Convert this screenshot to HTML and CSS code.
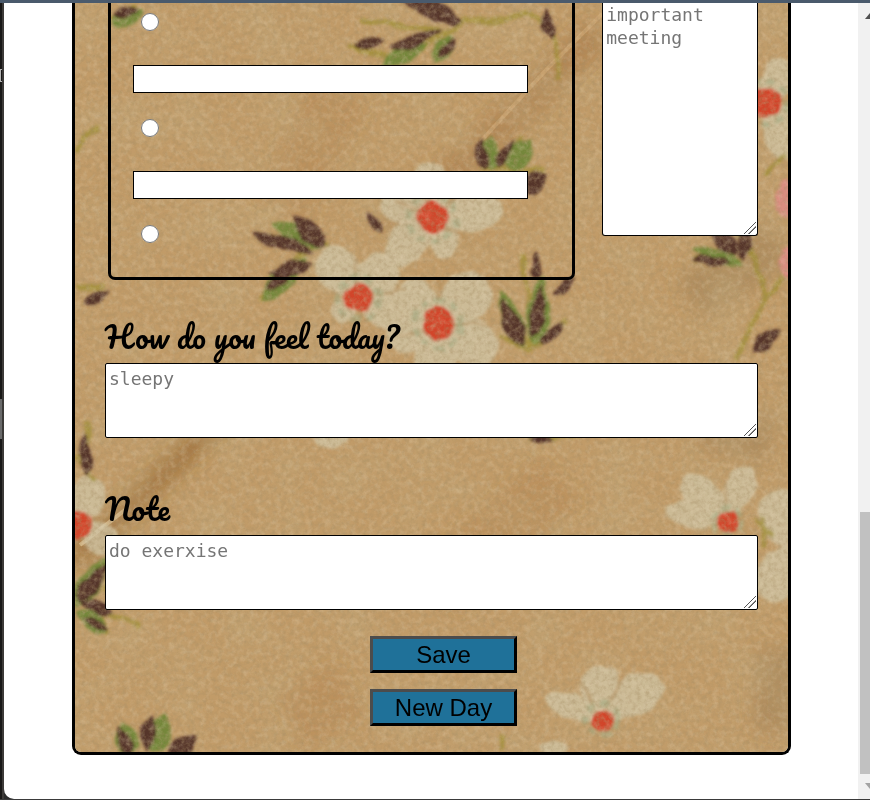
FILE: index.html
```html
<!DOCTYPE html>
<html lang="en">
<head>
<meta charset="utf-8">
<meta name="viewport" content="width=device-width, initial-scale=1">
<title>Daily planner</title>
<link rel="stylesheet" href="styles.css">
</head>
<body>
<div class="window">
  <div class="edge" aria-hidden="true"><span class="edge-mark"></span><span class="edge-tab"></span></div>
  <main class="page">
    <form class="planner">
      <svg class="fabric" viewBox="75 3 713 749" preserveAspectRatio="none" aria-hidden="true">
        <defs>
          <filter id="grain" x="0" y="0" width="100%" height="100%">
            <feTurbulence type="fractalNoise" baseFrequency="0.22" numOctaves="4" seed="8"/>
            <feColorMatrix values="0 0 0 0 .38  0 0 0 0 .27  0 0 0 0 .13  1.7 0 0 0 -.68"/>
          </filter>
          <filter id="light" x="0" y="0" width="100%" height="100%">
            <feTurbulence type="fractalNoise" baseFrequency="0.16" numOctaves="4" seed="31"/>
            <feColorMatrix values="0 0 0 0 .86  0 0 0 0 .73  0 0 0 0 .53  0 1.6 0 0 -.68"/>
          </filter>
          <filter id="cloud" x="0" y="0" width="100%" height="100%">
            <feTurbulence type="fractalNoise" baseFrequency="0.02" numOctaves="4" seed="5"/>
            <feColorMatrix values="0 0 0 0 .55  0 0 0 0 .42  0 0 0 0 .22  1.8 0 0 0 -.7"/>
          </filter>
          <filter id="soft" x="-10%" y="-10%" width="120%" height="120%">
            <feTurbulence type="fractalNoise" baseFrequency="0.05" numOctaves="2" seed="3"/>
            <feDisplacementMap in="SourceGraphic" scale="9" xChannelSelector="R" yChannelSelector="G"/>
            <feGaussianBlur stdDeviation="1.5"/>
          </filter>
          <filter id="haze" x="-20%" y="-20%" width="140%" height="140%"><feGaussianBlur stdDeviation="9"/></filter>
          <path id="leaf" d="M0 0C-13-8-14-22 0-38C13-22 13-9 0 0Z"/>
          <path id="petal" d="M0 0C-18-10-26-34-14-48C-5-58 9-56 16-46C25-32 16-10 0 0Z"/>
        </defs>
        <rect x="75" y="3" width="713" height="749" fill="#c19b68"/>
        <g filter="url(#haze)" fill="none">
          <path d="M600 30L480 150L390 230" stroke="#9d6c36" stroke-width="34" opacity=".4"/>
          <path d="M240 400L75 560" stroke="#8b5922" stroke-width="24" opacity=".55"/>
          <path d="M340 90L280 210M560 480L440 590M350 690L290 720" stroke="#ad7437" stroke-width="60" opacity=".25"/>
          <path d="M690 300L780 240M770 440L700 420M780 650V730" stroke="#95784e" stroke-width="50" opacity=".4"/>
        </g>
        <rect x="75" y="3" width="713" height="749" filter="url(#cloud)" opacity=".5"/>
        <path d="M602 14L548 68L480 142" fill="none" stroke="#d8b280" stroke-width="4" opacity=".5"/>
        <path d="M80 545L125 510" fill="none" stroke="#dfc79b" stroke-width="4" opacity=".7"/>
        <g filter="url(#soft)">
          <g fill="#d0c5a5" opacity=".76">
            <use href="#petal" transform="translate(432 218) rotate(82) scale(1 1.3)"/>
            <use href="#petal" transform="translate(432 218) rotate(-3)"/>
            <use href="#petal" transform="translate(432 218) rotate(-65)"/>
            <use href="#petal" transform="translate(432 218) rotate(-135) scale(1 1.1)"/>
            <use href="#petal" transform="translate(432 218) rotate(155) scale(.8)"/>
            <use href="#petal" transform="translate(358 298) rotate(-35) scale(1.1)"/>
            <use href="#petal" transform="translate(358 298) rotate(42)"/>
            <use href="#petal" transform="translate(358 298) rotate(110)"/>
            <use href="#petal" transform="translate(358 298) rotate(-130) scale(.6)"/>
            <use href="#petal" transform="translate(438 324) rotate(45) scale(1.2)"/>
            <use href="#petal" transform="translate(438 324) rotate(-40)"/>
            <use href="#petal" transform="translate(438 324) rotate(118) scale(1.2)"/>
            <use href="#petal" transform="translate(438 324) rotate(185) scale(1.1)"/>
            <use href="#petal" transform="translate(438 324) rotate(-110) scale(1)"/>
            <use href="#petal" transform="translate(765 103) rotate(30) scale(.9)"/>
            <use href="#petal" transform="translate(765 103) rotate(145) scale(1.2)"/>
            <use href="#petal" transform="translate(765 103) rotate(-100)"/>
            <use href="#petal" transform="translate(726 521) rotate(22) scale(.75 1.1)"/>
            <use href="#petal" transform="translate(726 521) rotate(-43) scale(.9 1.1)"/>
            <use href="#petal" transform="translate(726 521) rotate(-78) scale(.65 1.1)"/>
            <use href="#petal" transform="translate(785 548) rotate(-7) scale(1.1)"/>
            <use href="#petal" transform="translate(788 545) rotate(200) scale(1.1)"/>
            <use href="#petal" transform="translate(601 719) rotate(-3) scale(1)"/>
            <use href="#petal" transform="translate(601 719) rotate(56) scale(1 1.3)"/>
            <use href="#petal" transform="translate(601 719) rotate(-68) scale(.65 1.1)"/>
            <use href="#petal" transform="translate(80 524) rotate(15) scale(.9)"/>
            <use href="#petal" transform="translate(80 524) rotate(125) scale(.8)"/>
            <ellipse cx="331" cy="440" rx="17" ry="8"/><ellipse cx="555" cy="749" rx="14" ry="7"/>
          </g>
          <g fill="none" stroke="#b08a58" stroke-width="3" opacity=".5">
            <path d="M432 218L410 165M432 218L395 200M432 218L465 190M432 218L475 245M358 298L355 255M358 298L405 290M438 324L440 275M438 324L400 335M438 324L490 325M601 719L625 675M601 719L580 680M726 521L725 480"/>
          </g>
          <g fill="none" stroke="#a0a981" stroke-width="6" opacity=".6" stroke-dasharray="9 6">
            <circle cx="432" cy="218" r="24"/><circle cx="358" cy="298" r="21"/><circle cx="438" cy="324" r="23"/>
            <circle cx="765" cy="103" r="22"/><circle cx="726" cy="521" r="14"/><circle cx="601" cy="719" r="16"/>
          </g>
          <g fill="none" stroke="#9b8c31" stroke-width="5" opacity=".7">
            <path d="M350 46L400 62L464 20L505 20C535 5 550 25 557 52L557 80M360 20L440 30"/>
            <path d="M480 170L545 170M498 170L522 136M260 300L320 235M270 235L330 245"/>
            <path d="M530 353C535 315 526 285 522 255M530 350L505 305M530 350L568 320M530 350L500 335"/>
            <path d="M730 220C745 245 765 265 764 302L735 360M695 258L740 262M764 300L785 275M764 175L785 155"/>
            <path d="M87 420V475M77 455L95 480M75 150L98 125M78 600L140 625M105 590L120 570M100 610L108 635"/>
            <path d="M764 515V550M755 520L775 535M500 750L503 735M155 750L165 725M110 20L135 5M76 288L105 285M528 438L580 435"/>
          </g>
          <g fill="#75873a">
            <use href="#leaf" transform="translate(382 66) rotate(64) scale(.8 1.4)"/>
            <use href="#leaf" transform="translate(434 63) rotate(30) scale(.9)"/>
            <use href="#leaf" transform="translate(506 168) rotate(42) scale(1.3 1)"/>
            <use href="#leaf" transform="translate(488 172) rotate(5) scale(1)"/>
            <use href="#leaf" transform="translate(324 246) rotate(-65) scale(1 1.5)"/>
            <use href="#leaf" transform="translate(263 300) rotate(45) scale(1.1 1.6)"/>
            <use href="#leaf" transform="translate(524 348) rotate(-22) scale(1 1.7)"/>
            <use href="#leaf" transform="translate(535 346) rotate(6) scale(1.1 1.9)"/>
            <use href="#leaf" transform="translate(742 265) rotate(-72) scale(.8 1.4)"/>
            <use href="#leaf" transform="translate(76 606) rotate(32) scale(1.2 1.5)"/>
            <use href="#leaf" transform="translate(153 751) rotate(18) scale(1.3 1.1)"/>
            <use href="#leaf" transform="translate(131 755) rotate(-15) scale(1.1 .9)"/>
            <use href="#leaf" transform="translate(110 25) rotate(65) scale(1)"/>
            <use href="#leaf" transform="translate(107 634) rotate(-50)"/>
          </g>
          <g fill="#553429">
            <use href="#leaf" transform="translate(462 22) rotate(-68) scale(.9 1.9)"/>
            <use href="#leaf" transform="translate(356 46) rotate(79) scale(.6 .8)"/>
            <use href="#leaf" transform="translate(390 50) rotate(69) scale(.6 1.5)"/>
            <use href="#leaf" transform="translate(438 58) rotate(36) scale(.6 .7)"/>
            <use href="#leaf" transform="translate(551 41) rotate(-10) scale(.6 .9)"/>
            <use href="#leaf" transform="translate(483 172) rotate(-2) scale(.6 .9)"/>
            <use href="#leaf" transform="translate(496 169) rotate(30) scale(.6 .9)"/>
            <use href="#leaf" transform="translate(519 192) rotate(58) scale(1 .9)"/>
            <use href="#leaf" transform="translate(325 246) rotate(-48) scale(1.1 1.2)"/>
            <use href="#leaf" transform="translate(311 252) rotate(-73) scale(.8 1.7)"/>
            <use href="#leaf" transform="translate(312 263) rotate(-105) scale(.7 1.2)"/>
            <use href="#leaf" transform="translate(265 292) rotate(50) scale(.6 1.2)"/>
            <use href="#leaf" transform="translate(382 234) rotate(-38) scale(.6 .7)"/>
            <use href="#leaf" transform="translate(524 347) rotate(-25) scale(.9 1.4)"/>
            <use href="#leaf" transform="translate(533 340) rotate(10) scale(.7 1.5)"/>
            <use href="#leaf" transform="translate(539 344) rotate(50) scale(.6 .9)"/>
            <use href="#leaf" transform="translate(537 278) rotate(-5) scale(.5 .7)"/>
            <use href="#leaf" transform="translate(554 294) rotate(55) scale(.5 .7)"/>
            <use href="#leaf" transform="translate(738 256) rotate(-46) scale(.9 .9)"/>
            <use href="#leaf" transform="translate(730 264) rotate(-80) scale(.5 1)"/>
            <use href="#leaf" transform="translate(743 261) rotate(5) scale(.7 1)"/>
            <use href="#leaf" transform="translate(752 350) rotate(57) scale(.8 .9)"/>
            <use href="#leaf" transform="translate(84 304) rotate(62) scale(.6 .8)"/>
            <use href="#leaf" transform="translate(88 476) rotate(-6) scale(.6 1.1)"/>
            <use href="#leaf" transform="translate(78 602) rotate(38) scale(.9 1.2)"/>
            <use href="#leaf" transform="translate(115 612) rotate(-75) scale(.7 1)"/>
            <use href="#leaf" transform="translate(109 631) rotate(-65) scale(.5 .8)"/>
            <use href="#leaf" transform="translate(147 751) rotate(4) scale(.7 1)"/>
            <use href="#leaf" transform="translate(131 755) rotate(-26) scale(.6 .8)"/>
            <use href="#leaf" transform="translate(167 758) rotate(52) scale(1 1)"/>
            <use href="#leaf" transform="translate(112 15) rotate(75) scale(.6 .7)"/>
            <use href="#leaf" transform="translate(528 439) rotate(90) scale(.3 .7)"/>
          </g>
          <g fill="#d2452b">
            <circle cx="433" cy="218" r="16"/><circle cx="359" cy="297" r="15"/><circle cx="439" cy="324" r="16"/>
            <circle cx="766" cy="103" r="15"/><circle cx="727" cy="521" r="11"/><circle cx="602" cy="720" r="11"/><circle cx="78" cy="524" r="15"/>
          </g>
          <g fill="#d98d80"><ellipse cx="788" cy="198" rx="12" ry="20"/><ellipse cx="789" cy="262" rx="10" ry="16"/></g>
        </g>
        <rect x="75" y="3" width="713" height="749" filter="url(#grain)" opacity=".55"/>
        <rect x="75" y="3" width="713" height="749" filter="url(#light)" opacity=".32"/>
      </svg>

      <div class="day">
        <div class="tasks">
          <input class="tick" type="radio" name="task" aria-label="Task 1 done">
          <input class="task" type="text" aria-label="Task 2">
          <input class="tick" type="radio" name="task" aria-label="Task 2 done">
          <input class="task" type="text" aria-label="Task 3">
          <input class="tick" type="radio" name="task" aria-label="Task 3 done">
        </div>
        <textarea class="box reminder" aria-label="Reminders" placeholder="important meeting"></textarea>
      </div>

      <div class="field">
        <label class="heading" for="feel">How do you feel today?</label>
        <textarea class="box" id="feel" placeholder="sleepy"></textarea>
      </div>
      <div class="field field-note">
        <label class="heading" for="note">Note</label>
        <textarea class="box" id="note" placeholder="do exerxise"></textarea>
      </div>

      <div class="actions">
        <button class="action" type="button">Save</button>
        <button class="action" type="button">New Day</button>
      </div>
    </form>
  </main>
  <div class="scrollbar" aria-hidden="true">
    <svg class="arrow" viewBox="0 0 5 6"><path d="M0 6L5 0V6Z" fill="#505050"/></svg>
    <span class="thumb"></span>
    <svg class="arrow" viewBox="0 0 5 6"><path d="M0 0H5V6Z" fill="#a3a3a3"/></svg>
  </div>
</div>
</body>
</html>
```
FILE: styles.css
```css
* {
  box-sizing: border-box;
}

body {
  margin: 0;
  background: #2b2b2b;
}

.window {
  display: grid;
  grid-template-columns: 4px 1fr 12px;
  min-height: 100vh;
  border-top: 3px solid #4a5a6c;
  border-bottom: 1px solid #3a3a3a;
}

.edge {
  display: flex;
  flex-direction: column;
  background: #191817;
  border-right: 2px solid #3c3a38;
}

.edge-mark {
  height: 13px;
  margin-top: 66px;
  border: 1px solid #b5b5b5;
  border-right: 0;
}

.edge-tab {
  height: 40px;
  margin-top: 317px;
  background: #6a6a6a;
}

.page {
  padding: 0 67px 44px 68px;
  background: #fff;
  border-bottom-left-radius: 10px;
}

.planner {
  position: relative;
  isolation: isolate;
  overflow: hidden;
  padding: 0 30px 26px;
  border: 3px solid #000;
  border-top: 0;
  border-radius: 0 0 9px 9px;
}

.fabric {
  position: absolute;
  inset: 0;
  z-index: -1;
  width: 100%;
  height: 100%;
}

.day {
  display: grid;
  grid-template-columns: 3fr 1fr;
  align-items: start;
  gap: 27px;
  padding-left: 3px;
}

.tasks {
  display: flex;
  flex-direction: column;
  align-items: flex-start;
  padding: 10px 44px 34px 22px;
  border: 3px solid #000;
  border-top: 0;
  border-radius: 0 0 7px 7px;
}

.tick {
  width: 18px;
  height: 18px;
  margin: 0 0 0 8px;
}

.task {
  width: 100%;
  height: 28px;
  margin: 34px 0 26px;
  padding: 0 4px;
  border: 1px solid #000;
  background: #fff;
  font: 18px "Liberation Sans", sans-serif;
}

.box {
  display: block;
  width: 100%;
  height: 75px;
  margin: 0;
  padding: 3px;
  border: 1px solid #000;
  border-radius: 2px;
  background: #fff;
  font: 18px/23px "DejaVu Sans Mono", monospace;
}

.box::placeholder {
  color: #757575;
}

.box::-webkit-resizer {
  background:
    linear-gradient(135deg, transparent 46%, #555 47% 53%, transparent 54% 66%, #555 67% 73%, transparent 74%)
    2px 2px / 12px 12px no-repeat;
}

.reminder {
  height: 233px;
  padding-top: 0;
  border-top: 0;
  border-radius: 0 0 3px 3px;
}

.field {
  margin-top: 37px;
}

.field-note {
  margin-top: 51px;
}

.heading {
  display: block;
  margin-bottom: 6px;
  color: #000;
  font: 30px/40px Pacifico, cursive;
}

.actions {
  display: flex;
  flex-direction: column;
  align-items: center;
  gap: 16px;
  margin-top: 26px;
  padding-left: 24px;
}

.action {
  width: 147px;
  height: 37px;
  padding: 0;
  border: 3px solid;
  border-color: #4c4c4c #000 #000 #4c4c4c;
  background: #1f7199;
  color: #000;
  font: 24px/28px "Liberation Sans", sans-serif;
}

.scrollbar {
  display: flex;
  flex-direction: column;
  align-items: flex-end;
  gap: 9px;
  padding: 10px 0;
  background: #f1f1f1;
}

.arrow {
  width: 5px;
  height: 6px;
}

.thumb {
  width: 10px;
  height: 262px;
  margin-top: auto;
  background: #c1c1c1;
}
```
